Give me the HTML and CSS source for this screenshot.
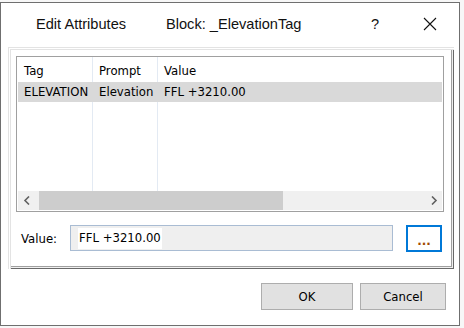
FILE: index.html
```html
<!DOCTYPE html>
<html>
<head>
<meta charset="utf-8">
<link rel="stylesheet" href="styles.css">
</head>
<body>
<div class="window">
  <div class="titlebar">
    <span class="title-main">Edit Attributes</span>
    <span class="title-block">Block: _ElevationTag</span>
    <span class="title-help">?</span>
    <span class="title-close">
      <svg width="14" height="14" viewBox="0 0 14 14"><path d="M1 1L13 13M13 1L1 13" stroke="#111" stroke-width="1.1" fill="none"/></svg>
    </span>
  </div>
  <div class="frame">
    <div class="listview">
      <div class="lv-header">
        <div class="col col-tag">Tag</div>
        <div class="col col-prompt">Prompt</div>
        <div class="col col-value">Value</div>
      </div>
      <div class="lv-row selected">
        <div class="col col-tag">ELEVATION</div>
        <div class="col col-prompt">Elevation</div>
        <div class="col col-value">FFL +3210.00</div>
      </div>
      <div class="lv-body">
        <div class="col col-tag"></div>
        <div class="col col-prompt"></div>
        <div class="col col-value"></div>
      </div>
      <div class="hscroll">
        <div class="sb-btn">
          <svg width="8" height="9" viewBox="0 0 8 9"><path d="M6 0.5L2 4.5L6 8.5" stroke="#606060" stroke-width="1.6" fill="none"/></svg>
        </div>
        <div class="sb-track">
          <div class="sb-thumb"></div>
        </div>
        <div class="sb-btn">
          <svg width="8" height="9" viewBox="0 0 8 9"><path d="M2 0.5L6 4.5L2 8.5" stroke="#606060" stroke-width="1.6" fill="none"/></svg>
        </div>
      </div>
    </div>
    <div class="value-row">
      <span class="value-label">Value:</span>
      <div class="textbox"><span class="sel-text">FFL +3210.00</span></div>
      <button class="dots-btn">...</button>
    </div>
  </div>
  <div class="buttons">
    <button class="btn btn-ok">OK</button>
    <button class="btn btn-cancel">Cancel</button>
  </div>
</div>
</body>
</html>
```
FILE: styles.css
```css
html, body {
  margin: 0;
  padding: 0;
}
body {
  background: #f7f7f7;
  width: 464px;
  height: 328px;
  overflow: hidden;
  font-family: "DejaVu Sans", "Liberation Sans", sans-serif;
  font-size: 11.7px;
  color: #000;
}
.window {
  box-sizing: border-box;
  width: 460px;
  height: 324px;
  margin-top: 2px;
  border: 1px solid #6f6f6f;
  background: #fff;
  display: flex;
  flex-direction: column;
}
.titlebar {
  box-sizing: border-box;
  height: 44px;
  display: flex;
  align-items: flex-start;
  padding-top: 12px;
  padding-left: 35px;
  font-family: "Liberation Sans", sans-serif;
  font-size: 14.6px;
  line-height: 18px;
  color: #111;
}
.title-main {
  width: 130px;
}
.title-block {
  flex: 1;
}
.title-help {
  width: 52px;
}
.title-close {
  width: 36px;
  padding-top: 2px;
}
.title-close svg {
  display: block;
}
.frame {
  box-sizing: border-box;
  width: 446px;
  height: 222px;
  margin-left: 7px;
  padding: 9px 0 0 8px;
  box-shadow: inset 1px 1px 0 #e3e3e3, inset 2px 2px 0 #fff, inset 3px 3px 0 #e3e3e3,
              inset -1px -1px 0 #696969, inset -2px -2px 0 #f0f0f0, inset -3px -3px 0 #a0a0a0;
}
.listview {
  box-sizing: border-box;
  width: 428px;
  height: 156px;
  border: 1px solid #a0a0a0;
  display: flex;
  flex-direction: column;
  padding: 0 1px 1px 1px;
}
.lv-header, .lv-row, .lv-body {
  display: flex;
}
.lv-header {
  height: 25px;
  line-height: 28px;
}
.lv-row {
  height: 20px;
  line-height: 21px;
}
.lv-row.selected {
  background: #d9d9d9;
}
.lv-body {
  flex: 1;
}
.col {
  box-sizing: border-box;
  white-space: nowrap;
  overflow: hidden;
}
.col-tag {
  width: 75px;
  padding-left: 6px;
  border-right: 1px solid #e3eaf3;
}
.col-prompt {
  width: 65px;
  padding-left: 6px;
  border-right: 1px solid #e3eaf3;
}
.col-value {
  flex: 1;
  padding-left: 6px;
}
.lv-row.selected .col {
  border-right-color: #d9d9d9;
}
.hscroll {
  height: 19px;
  display: flex;
  background: #f0f0f0;
}
.sb-btn {
  width: 17px;
  display: flex;
  align-items: center;
  justify-content: center;
}
.sb-track {
  flex: 1;
  display: flex;
  align-items: stretch;
  padding-left: 4px;
}
.sb-thumb {
  width: 244px;
  background: #cdcdcd;
}
.value-row {
  display: flex;
  align-items: center;
  margin-top: 13px;
  height: 26px;
}
.value-label {
  width: 49px;
  padding-left: 5px;
  padding-top: 2px;
}
.textbox {
  box-sizing: border-box;
  width: 323px;
  height: 26px;
  border: 1px solid #a9bcd3;
  background: #efefef;
  display: flex;
  align-items: center;
  padding-left: 7px;
}
.sel-text {
  background: #fff;
  line-height: 21px;
  padding: 0 1px;
}
.dots-btn {
  box-sizing: border-box;
  width: 36px;
  height: 27px;
  margin-left: 13px;
  border: 2px solid #0078d7;
  background: #fff;
  color: #a04a00;
  font-family: "DejaVu Sans", sans-serif;
  font-size: 12px;
  font-weight: bold;
  padding: 5px 0 0 0;
  line-height: 16px;
}
.buttons {
  display: flex;
  justify-content: flex-end;
  gap: 7px;
  margin-top: 14px;
  padding-right: 13px;
}
.btn {
  box-sizing: border-box;
  height: 27px;
  border: 1px solid #adadad;
  background: #e1e1e1;
  font-family: "DejaVu Sans", sans-serif;
  font-size: 11.7px;
  color: #000;
  padding: 0;
}
.btn-ok {
  width: 92px;
}
.btn-cancel {
  width: 86px;
}
```
